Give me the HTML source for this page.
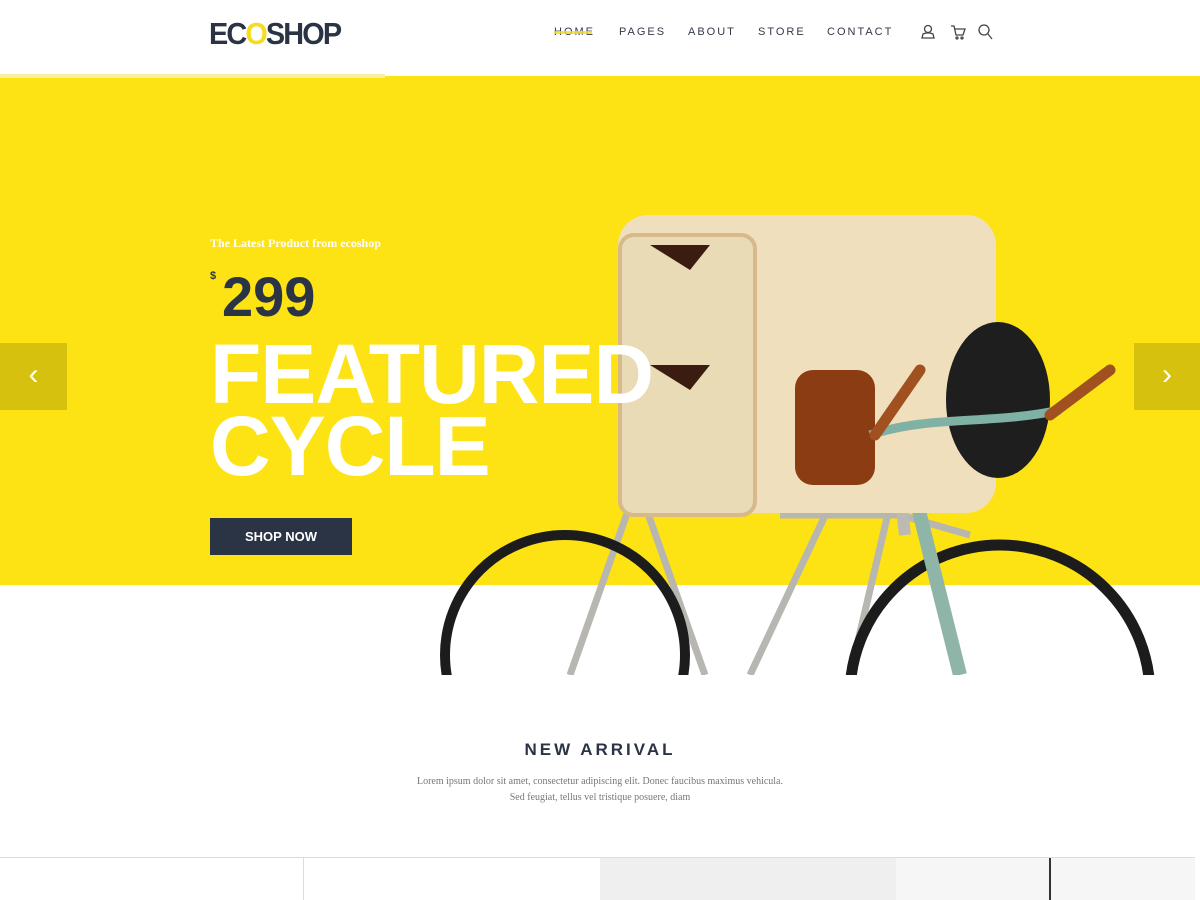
<!DOCTYPE html>
<html><head><meta charset="utf-8"><style>
*{margin:0;padding:0;box-sizing:border-box}
body{width:1200px;height:900px;overflow:hidden;background:#fff;font-family:"Liberation Sans",sans-serif;position:relative}
.logo{position:absolute;left:209px;top:16px;font-size:31px;font-weight:bold;color:#2b3445;letter-spacing:-2px;transform:scaleX(.93);transform-origin:left}
.nav{position:absolute;top:26px;font-size:11px;letter-spacing:2px;color:#333a48}
.hero{position:absolute;left:0;top:76px;width:1200px;height:509px;background:#fde214}
.abs{position:absolute}
</style></head><body>
<div class="logo">E<span style="color:#2b3445">C</span><span style="color:#f5dc1c">O</span>SHOP</div>
<div class="nav" style="left:554px">HOME</div>
<div class="abs" style="left:554px;top:31px;width:38px;height:3px;background:#f5dc1c;opacity:.8"></div>
<div class="nav" style="left:619px">PAGES</div>
<div class="nav" style="left:688px">ABOUT</div>
<div class="nav" style="left:758px">STORE</div>
<div class="nav" style="left:827px">CONTACT</div>
<svg class="abs" style="left:918px;top:22px" width="80" height="20" fill="none" stroke="#444" stroke-width="1.3">
<circle cx="10" cy="7" r="3.5"/><path d="M4 16h12l-1-4-3-1h-4l-3 1z"/>
<path d="M33 4h3l2 9h7l2-6h-10"/><circle cx="39" cy="16" r="1"/><circle cx="44" cy="16" r="1"/>
<circle cx="66" cy="8" r="5"/><path d="M70 12l4 5"/></svg>
<div class="hero"></div>
<div class="abs" style="left:0;top:74px;width:385px;height:4px;background:#fbeea0"></div>
<svg class="abs" style="left:430px;top:205px" width="740" height="470">
<defs><clipPath id="c"><rect width="740" height="470"/></clipPath></defs>
<g clip-path="url(#c)">
<g fill="none" stroke="#b8b6b0" stroke-width="7">
<path d="M200 300L140 470M215 300L275 470M350 310L470 310 540 330M400 300L320 470M460 300L420 470"/>
</g>
<circle cx="135" cy="450" r="120" fill="none" stroke="#1c1c1c" stroke-width="10"/>
<circle cx="570" cy="490" r="150" fill="none" stroke="#1c1c1c" stroke-width="11"/>
<path d="M470 230L530 470" stroke="#8fb5a8" stroke-width="14"/>
<path d="M455 150L475 330" stroke="#bdbab4" stroke-width="12"/>
<rect x="188" y="10" width="378" height="298" rx="30" fill="#efdfbd"/>
<rect x="190" y="30" width="135" height="280" rx="14" fill="#eadbb7" stroke="#d7b98a" stroke-width="4"/>
<path d="M220 40l60 0-20 25z" fill="#3a1d10"/>
<path d="M220 160l60 0-20 25z" fill="#3a1d10"/>
<rect x="365" y="165" width="80" height="115" rx="18" fill="#8b3c12"/>
<ellipse cx="568" cy="195" rx="52" ry="78" fill="#1e1e1e"/>
<path d="M440 230C500 210 560 220 630 205" stroke="#7fb2a4" stroke-width="9" fill="none"/>
<path d="M445 230L490 165M620 210L680 165" stroke="#a0511f" stroke-width="11" stroke-linecap="round"/>
</g></svg>
<div class="abs" style="left:210px;top:236px;font-family:'Liberation Serif',serif;font-weight:bold;font-size:12px;color:#fff">The Latest Product from ecoshop</div>
<div class="abs" style="left:210px;top:270px;font-size:11px;font-weight:bold;color:#2b3445">$</div>
<div class="abs" style="left:222px;top:264px;font-size:56px;font-weight:bold;color:#2b3445">299</div>
<div class="abs" style="left:210px;top:338px;font-size:84px;font-weight:bold;color:#fff;line-height:72px;letter-spacing:-1px">FEATURED<br>CYCLE</div>
<div class="abs" style="left:210px;top:518px;width:142px;height:37px;background:#2b3445;color:#fff;font-size:13px;font-weight:bold;text-align:center;line-height:37px">SHOP NOW</div>
<div class="abs" style="left:0;top:343px;width:67px;height:67px;background:#d6c10e;color:#fff;font-size:30px;text-align:center;line-height:64px">‹</div>
<div class="abs" style="left:1134px;top:343px;width:66px;height:67px;background:#d6c10e;color:#fff;font-size:30px;text-align:center;line-height:64px">›</div>
<div class="abs" style="left:0;top:740px;width:1200px;text-align:center;font-size:17px;font-weight:bold;letter-spacing:3px;color:#2b3445">NEW ARRIVAL</div>
<div class="abs" style="left:0;top:774px;width:1200px;text-align:center;font-family:'Liberation Serif',serif;font-size:10px;line-height:16px;color:#777">Lorem ipsum dolor sit amet, consectetur adipiscing elit. Donec faucibus maximus vehicula.<br>Sed feugiat, tellus vel tristique posuere, diam</div>
<div class="abs" style="left:0;top:857px;width:1195px;height:1px;background:#dcdce0"></div>
<div class="abs" style="left:303px;top:857px;width:1px;height:43px;background:#dcdce0"></div>
<div class="abs" style="left:600px;top:858px;width:296px;height:42px;background:#efefef"></div>
<div class="abs" style="left:896px;top:858px;width:299px;height:42px;background:#f6f6f6"></div>
<div class="abs" style="left:1049px;top:858px;width:2px;height:42px;background:#333"></div>
</body></html>
